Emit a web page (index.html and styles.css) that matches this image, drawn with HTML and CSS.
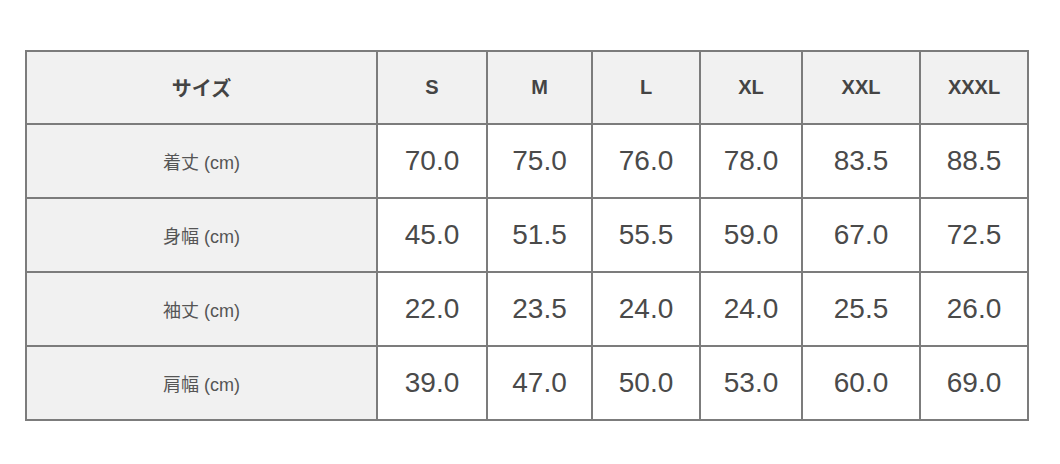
FILE: index.html
```html
<!DOCTYPE html>
<html lang="ja">
<head>
<meta charset="utf-8">
<title>サイズ表</title>
<link rel="stylesheet" href="styles.css">
</head>
<body>
<div class="page">
<table class="size-table">
  <colgroup>
    <col class="c-label">
    <col class="c-s">
    <col class="c-m">
    <col class="c-l">
    <col class="c-xl">
    <col class="c-xxl">
    <col class="c-xxxl">
  </colgroup>
  <thead>
    <tr>
      <th>サイズ</th><th>S</th><th>M</th><th>L</th><th>XL</th><th>XXL</th><th>XXXL</th>
    </tr>
  </thead>
  <tbody>
    <tr><th class="label">着丈 (cm)</th><td>70.0</td><td>75.0</td><td>76.0</td><td>78.0</td><td>83.5</td><td>88.5</td></tr>
    <tr><th class="label">身幅 (cm)</th><td>45.0</td><td>51.5</td><td>55.5</td><td>59.0</td><td>67.0</td><td>72.5</td></tr>
    <tr><th class="label">袖丈 (cm)</th><td>22.0</td><td>23.5</td><td>24.0</td><td>24.0</td><td>25.5</td><td>26.0</td></tr>
    <tr><th class="label">肩幅 (cm)</th><td>39.0</td><td>47.0</td><td>50.0</td><td>53.0</td><td>60.0</td><td>69.0</td></tr>
  </tbody>
</table>
</div>
</body>
</html>
```
FILE: styles.css
```css
html, body {
  margin: 0;
  padding: 0;
  background: #ffffff;
}
.page {
  padding: 50px 0 0 25px;
  font-family: "Liberation Sans", Arial, "Noto Sans CJK JP", sans-serif;
}
.size-table {
  border-collapse: collapse;
  table-layout: fixed;
  width: 1002px;
}
.c-label { width: 351px; }
.c-s { width: 110px; }
.c-m { width: 105px; }
.c-l { width: 108px; }
.c-xl { width: 102px; }
.c-xxl { width: 118px; }
.c-xxxl { width: 108px; }
.size-table th,
.size-table td {
  border: 2px solid #7c7c7c;
  height: 72px;
  padding: 0;
  text-align: center;
  vertical-align: middle;
}
.size-table thead th {
  background: #f1f1f1;
  color: #444444;
  font-size: 20px;
  font-weight: bold;
  height: 71px;
}
.size-table th.label {
  background: #f1f1f1;
  color: #555555;
  font-size: 18px;
  font-weight: normal;
}
.size-table td {
  background: #ffffff;
  color: #4a4a4a;
  font-size: 28px;
}
```
